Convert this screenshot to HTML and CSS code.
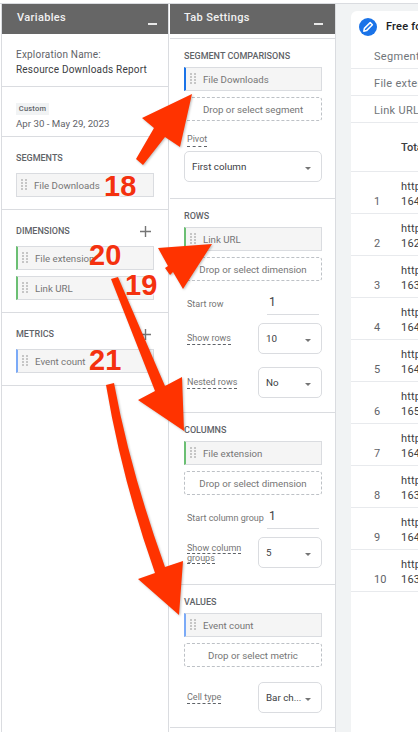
FILE: index.html
```html
<!DOCTYPE html>
<html lang="en">
<head>
<meta charset="utf-8">
<title>Resource Downloads Report</title>
<link rel="stylesheet" href="styles.css">
</head>
<body>
<div class="app">
  <aside class="panel vars">
    <header class="panel-head"><span>Variables</span><i class="minus"></i></header>
    <section class="v-sec v-name">
      <div class="muted">Exploration Name:</div>
      <div class="dark">Resource Downloads Report</div>
    </section>
    <section class="v-sec v-date">
      <span class="tag">Custom</span>
      <div class="muted date">Apr 30 - May 29, 2023</div>
    </section>
    <section class="v-sec">
      <h3 class="heading">SEGMENTS</h3>
      <div class="chip plain"><i class="grip"></i>File Downloads</div>
    </section>
    <section class="v-sec">
      <h3 class="heading with-plus">DIMENSIONS<svg class="plus" viewBox="0 0 11 11"><path d="M5.5 0v11M0 5.5h11"/></svg></h3>
      <div class="chip green"><i class="grip"></i>File extension</div>
      <div class="chip green"><i class="grip"></i>Link URL</div>
    </section>
    <section class="v-sec">
      <h3 class="heading with-plus">METRICS<svg class="plus" viewBox="0 0 11 11"><path d="M5.5 0v11M0 5.5h11"/></svg></h3>
      <div class="chip blue"><i class="grip"></i>Event count</div>
    </section>
  </aside>

  <aside class="panel tabs">
    <header class="panel-head"><span>Tab Settings</span><i class="minus"></i></header>
    <div class="tabs-body">
      <section class="t-sec s1">
        <h3 class="heading">SEGMENT COMPARISONS</h3>
        <div class="chip strong"><i class="grip"></i>File Downloads</div>
        <div class="drop">Drop or select segment</div>
        <div class="pivot"><span class="dashed">Pivot</span></div>
        <div class="select wide"><span>First column</span><i class="caret"></i></div>
      </section>
      <section class="t-sec s2">
        <h3 class="heading">ROWS</h3>
        <div class="chip green"><i class="grip"></i>Link URL</div>
        <div class="drop">Drop or select dimension</div>
        <div class="field f-start"><span class="lab">Start row</span><span class="num">1</span></div>
        <div class="field f-a"><span class="lab dashed">Show rows</span><div class="select"><span>10</span><i class="caret"></i></div></div>
        <div class="field f-b"><span class="lab dashed">Nested rows</span><div class="select"><span>No</span><i class="caret"></i></div></div>
      </section>
      <section class="t-sec s3">
        <h3 class="heading">COLUMNS</h3>
        <div class="chip green"><i class="grip"></i>File extension</div>
        <div class="drop">Drop or select dimension</div>
        <div class="field f-start"><span class="lab">Start column group</span><span class="num">1</span></div>
        <div class="field f-a"><div class="lab two"><span class="dashed">Show column groups</span></div><div class="select"><span>5</span><i class="caret"></i></div></div>
      </section>
      <section class="t-sec s4">
        <h3 class="heading">VALUES</h3>
        <div class="chip blue"><i class="grip"></i>Event count</div>
        <div class="drop">Drop or select metric</div>
        <div class="field f-c"><span class="lab dashed">Cell type</span><div class="select"><span>Bar ch...</span><i class="caret"></i></div></div>
      </section>
    </div>
  </aside>

  <main class="canvas">
    <div class="card">
      <div class="card-title">
        <span class="pen"><svg viewBox="0 0 18 18"><path d="M4.8 13.2l.6-2.8 5.8-5.8 2.2 2.2-5.8 5.8z" fill="none" stroke="#fff" stroke-width="1.5" stroke-linejoin="round"/></svg></span>
        <b>Free form 1</b>
      </div>
      <div class="meta">Segment</div>
      <div class="meta">File extension</div>
      <div class="meta">Link URL</div>
      <div class="total"><b>Total</b></div>
      <div class="row"><span class="idx">1</span><span class="url">https<br>164</span></div>
      <div class="row"><span class="idx">2</span><span class="url">https<br>162</span></div>
      <div class="row"><span class="idx">3</span><span class="url">https<br>163</span></div>
      <div class="row"><span class="idx">4</span><span class="url">https<br>164</span></div>
      <div class="row"><span class="idx">5</span><span class="url">https<br>164</span></div>
      <div class="row"><span class="idx">6</span><span class="url">https<br>165</span></div>
      <div class="row"><span class="idx">7</span><span class="url">https<br>164</span></div>
      <div class="row"><span class="idx">8</span><span class="url">https<br>163</span></div>
      <div class="row"><span class="idx">9</span><span class="url">https<br>164</span></div>
      <div class="row"><span class="idx">10</span><span class="url">https<br>163</span></div>
    </div>
  </main>

  <svg class="arrows" viewBox="0 0 418 732" aria-hidden="true">
    <path d="M192 94L142 118L154 128L136 159L143 165L165 137L180 147Z"/>
    <path d="M212 244L158 248L168 266L165 268L170 275L173 272L183 289Z"/>
    <path d="M111 279L118 277L165 386L182 377L184 431L138 400L155 391Z"/>
    <path d="M106 385L114 383Q130 470 165 567L183 561L179 615L138 579L155 573Q122 480 106 385Z"/>
  </svg>
  <span class="num-mark n18">18</span>
  <span class="num-mark n20">20</span>
  <span class="num-mark n19">19</span>
  <span class="num-mark n21">21</span>
</div>
</body>
</html>
```

FILE: styles.css
```css
* { box-sizing: border-box; }
html, body { margin: 0; padding: 0; }
body { width: 418px; height: 732px; overflow: hidden; background: #fff; font-family: Roboto, "Liberation Sans", sans-serif; }
.app { position: relative; display: flex; width: 418px; height: 732px; overflow: hidden; padding-top: 3px; background: #fff; }
.app::before { content: ""; position: absolute; left: 0; right: 0; top: 3px; height: 1px; background: #dadce0; }

.panel { flex: none; padding-top: 1px; background: #fff; }
.vars { width: 168px; margin-left: 1px; border-left: 1px solid #dadce0; border-right: 1px solid #dadce0; }
.tabs { width: 166px; margin-left: 1px; border-right: 1px solid #dadce0; }
.panel-head { display: flex; justify-content: space-between; height: 30px; background: #666; color: #f1f1f1; font-size: 11px; font-weight: 500; letter-spacing: .35px; line-height: 28px; padding: 0 11px 0 15px; }
.tabs .panel-head { padding-left: 14px; padding-right: 12px; }
.minus { width: 9px; height: 2px; margin-top: 19px; background: #e8e8e8; }

.v-sec { border-bottom: 1px solid #dadce0; padding: 15px 14px 12px 14px; }
.v-name { height: 53px; padding-top: 13px; padding-bottom: 0; }
.v-date { height: 50px; padding-top: 16px; padding-bottom: 0; }
.muted { color: #5f6368; font-size: 10px; letter-spacing: .2px; line-height: 15px; }
.muted.date { font-size: 9.7px; letter-spacing: 0; }
.dark { color: #3c4043; font-size: 10px; letter-spacing: .2px; line-height: 15px; }
.tag { display: block; width: 33px; height: 12px; background: #f1f3f4; color: #5f6368; font-size: 7.5px; font-weight: 500; line-height: 12px; text-align: center; letter-spacing: .2px; margin-bottom: 1px; }
.heading { position: relative; margin: 0 0 9px; color: #5f6368; font-size: 9px; font-weight: 500; line-height: 12px; }
.plus { position: absolute; right: 3px; top: 1px; width: 11px; height: 11px; fill: none; stroke: #757575; stroke-width: 1.4; }

.chip { display: flex; align-items: center; height: 24px; background: #f5f5f5; border: 1px solid #dadce0; color: #757575; font-size: 9.7px; }
.chip + .chip { margin-top: 6px; }
.chip.green { border-left: 2px solid #6bbf73; }
.chip.blue { border-left: 2px solid #7baaf7; }
.chip.strong { border-left: 2px solid #1a73e8; }
.grip { flex: none; width: 6px; height: 12px; margin: 0 7px 0 4px; background-image: radial-gradient(circle at 1px 1px, #c6c6c6 1.1px, transparent 1.2px), radial-gradient(circle at 1px 1px, #c6c6c6 1.1px, transparent 1.2px); background-size: 6px 3px; background-repeat: repeat; background-position: 0 0, 4px 0; }

.tabs-body { padding-top: 4px; }
.t-sec { border-top: 1px solid #dadce0; padding: 11px 13px 0 14px; }
.t-sec .heading { margin-bottom: 5px; }
.s1 { height: 160px; }
.s2 { height: 214px; }
.s3 { height: 172px; }
.s4 { height: 144px; border-bottom: 1px solid #dadce0; }
.drop { height: 24px; margin-top: 6px; border: 1px dashed #bdc1c6; border-radius: 3px; color: #757575; font-size: 9.7px; line-height: 23px; text-align: center; }
.pivot { margin: 12px 0 5px 3px; height: 13px; font-size: 9px; line-height: 12px; color: #757575; }
.dashed { border-bottom: 1px dashed #5f6368; }
.pivot .dashed { display: inline-block; height: 14px; }
.select { position: relative; display: flex; align-items: center; flex: none; width: 64px; height: 31px; border: 1px solid #dadce0; border-radius: 5px; padding: 0 7px; color: #3c4043; font-size: 9.8px; }
.select.wide { width: 100%; }
.caret { position: absolute; right: 10px; top: 15px; width: 0; height: 0; border-left: 3px solid transparent; border-right: 3px solid transparent; border-top: 3px solid #757575; }
.field { display: flex; align-items: center; justify-content: space-between; padding-left: 3px; }
.lab { color: #757575; font-size: 9px; white-space: nowrap; }
.lab.dashed { padding-bottom: 1px; }
.two { width: 56px; white-space: normal; line-height: 10px; }
.num { flex: none; width: 52px; height: 23px; margin-right: 3px; padding-left: 2px; border-bottom: 1px solid #dadce0; color: #3c4043; font-size: 12px; line-height: 20px; }
.f-start { margin-top: 11px; }
.f-a { margin-top: 8px; }
.f-b { margin-top: 13px; }
.f-c { margin-top: 15px; }

.canvas { flex: 1; min-width: 0; padding: 8px 0 0 15px; background: #f1f3f4; overflow: hidden; }
.card { width: 200px; height: 740px; background: #fff; border-radius: 6px 0 0 0; color: #3c4043; font-size: 11px; overflow: hidden; }
.card-title { display: flex; align-items: center; height: 31px; padding: 0 0 0 8px; gap: 9px; font-size: 11px; }
.card-title b { font-weight: 500; color: #202124; letter-spacing: .2px; }
.pen { display: block; width: 18px; height: 18px; border-radius: 50%; background: #1a73e8; }
.pen svg { display: block; width: 18px; height: 18px; }
.meta { height: 27px; padding-left: 23px; border-bottom: 1px solid #e8eaed; color: #70757a; font-size: 11px; line-height: 29px; white-space: nowrap; letter-spacing: .3px; }
.total { height: 49px; padding-left: 50px; border-bottom: 1px solid #e8eaed; line-height: 50px; font-size: 11px; }
.total b { font-weight: 500; color: #3c4043; }
.row { position: relative; height: 42px; padding-left: 50px; border-bottom: 1px solid #e8eaed; }
.url { display: block; padding-top: 7px; line-height: 15px; font-size: 11px; letter-spacing: .2px; }
.idx { position: absolute; left: 23px; top: 22px; line-height: 15px; font-size: 11px; color: #5f6368; }

.arrows { position: absolute; left: 0; top: 0; width: 418px; height: 732px; fill: #ff3300; filter: drop-shadow(1px 1px 1px rgba(0,0,0,.25)); }
.num-mark { position: absolute; color: #f4310f; font-family: "Liberation Sans", sans-serif; font-size: 29px; font-weight: 700; line-height: 28px; text-shadow: 1px 1px 1px rgba(255,255,255,.6); }
.n18 { left: 104px; top: 172px; }
.n20 { left: 89px; top: 241px; }
.n19 { left: 125px; top: 271px; }
.n21 { left: 89px; top: 346px; }
```
